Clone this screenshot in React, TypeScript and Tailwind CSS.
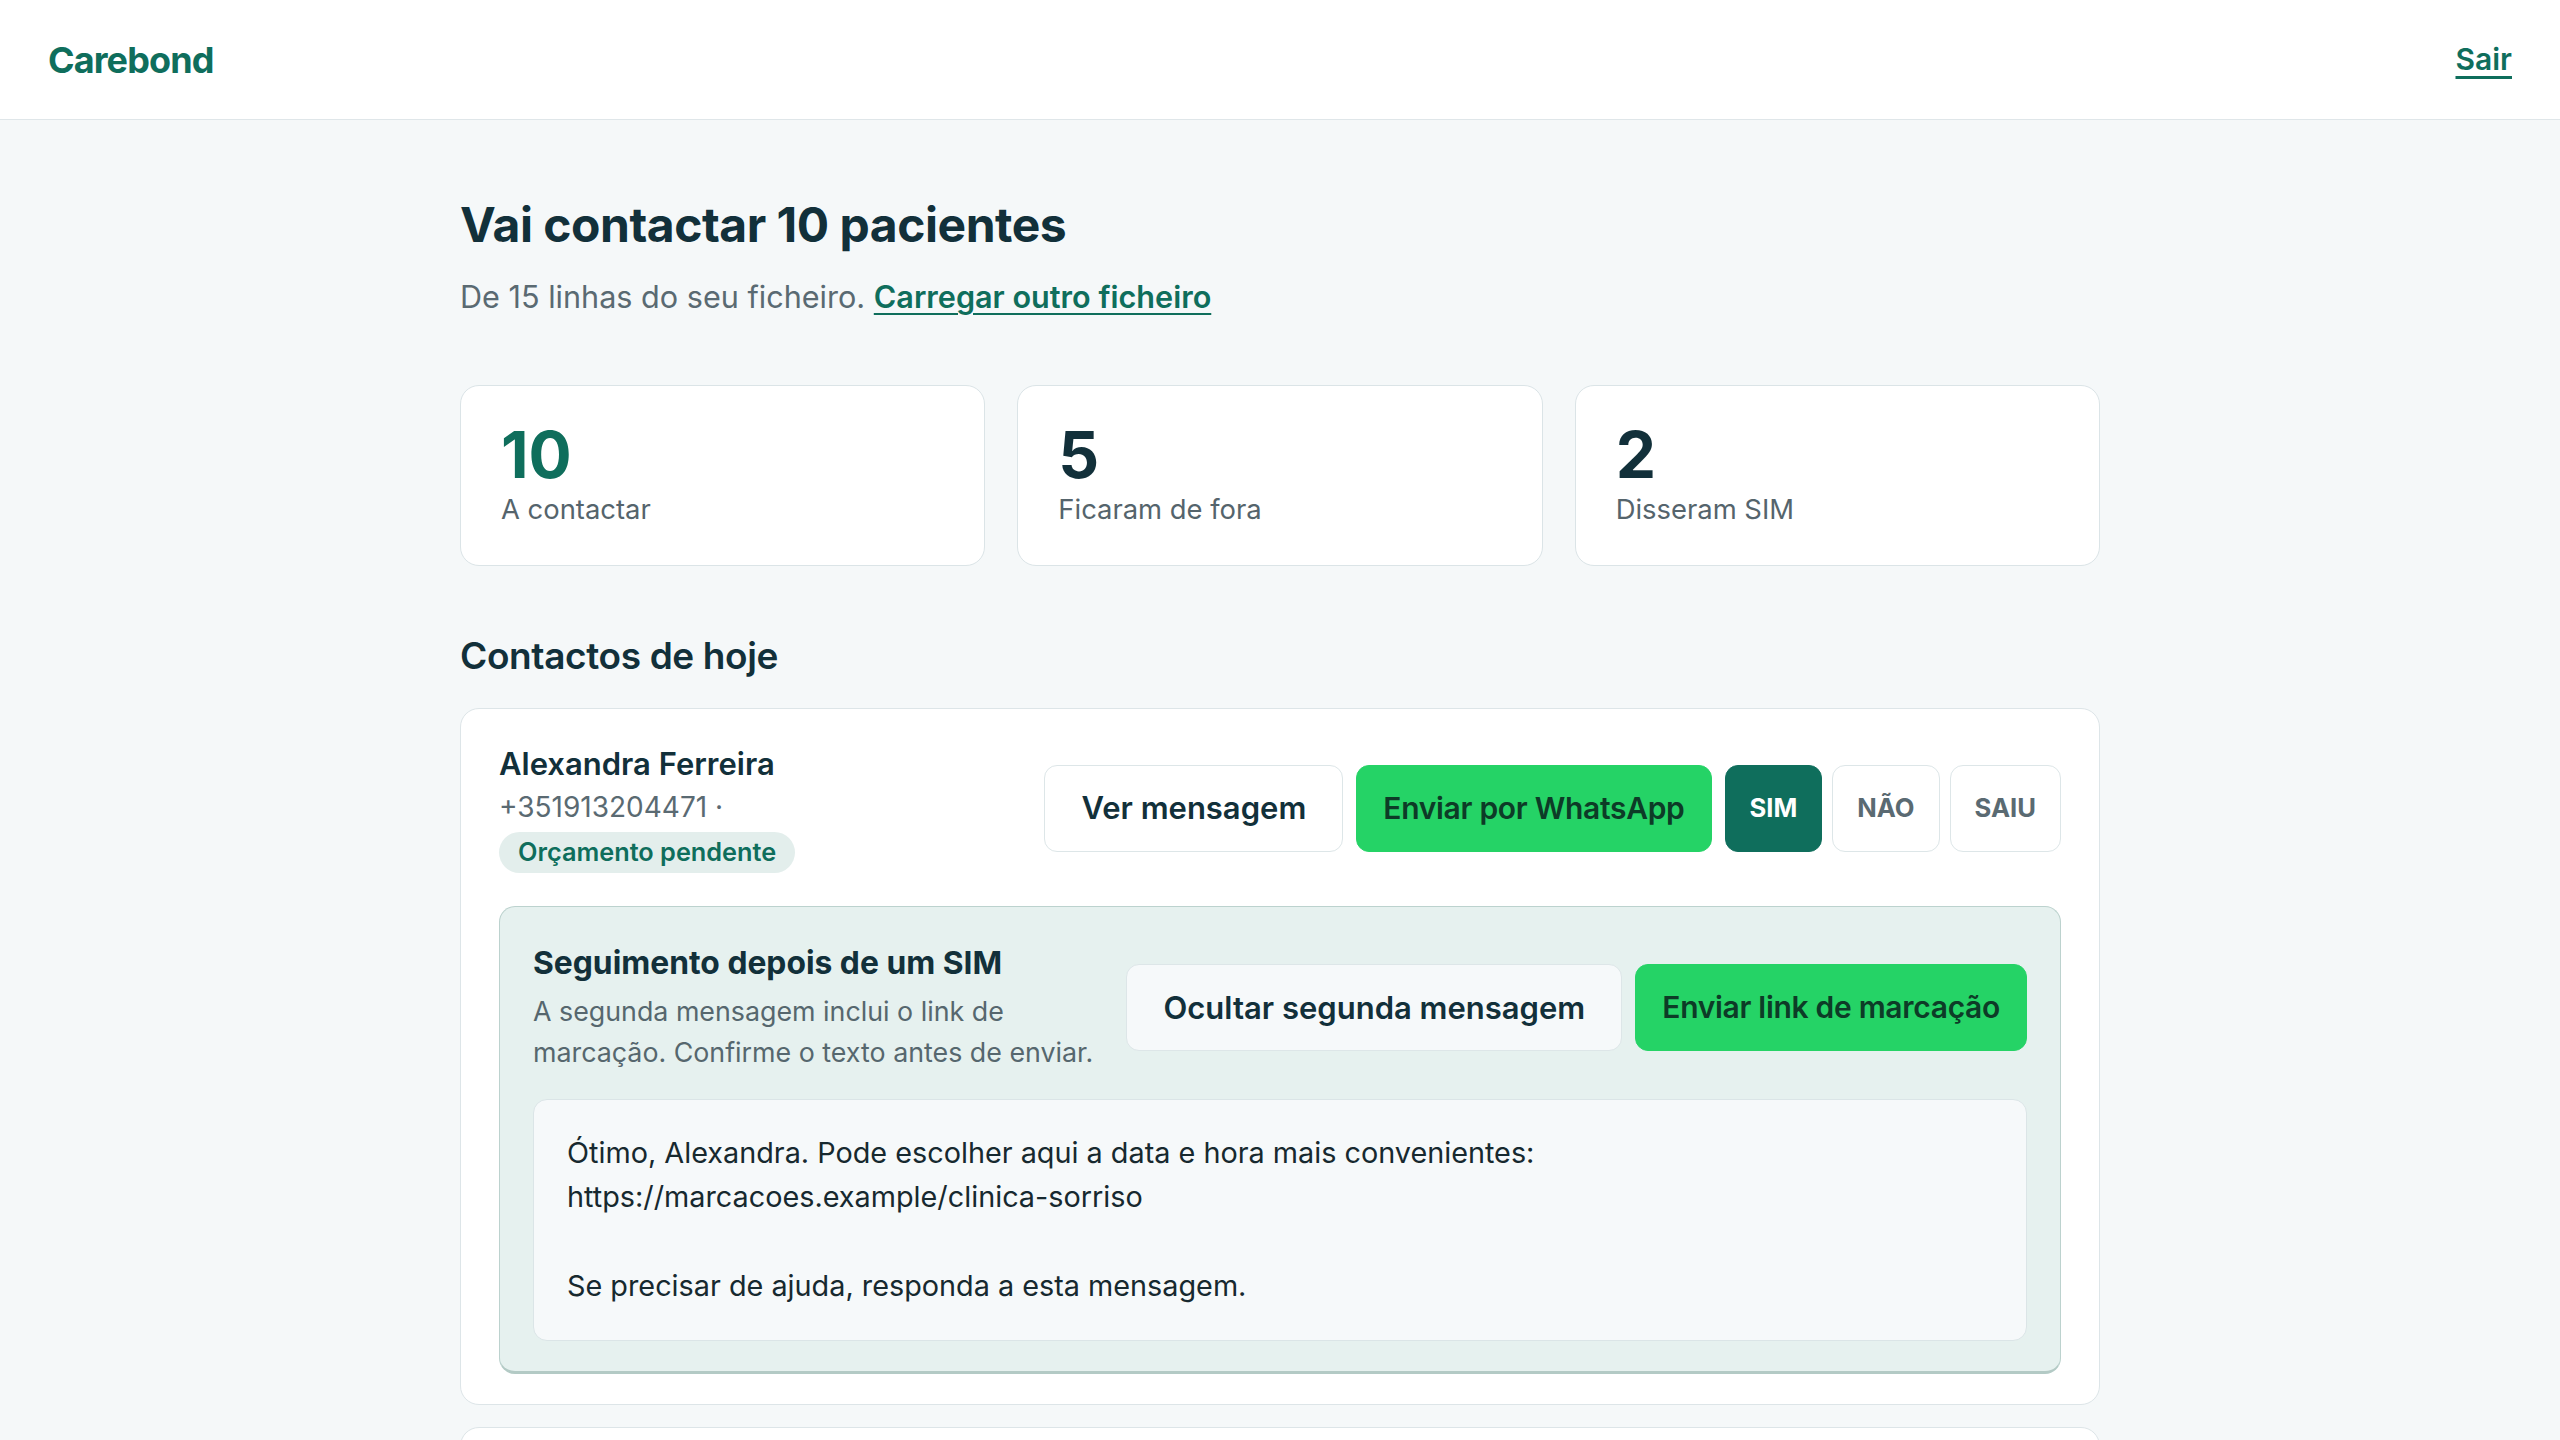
export default function App() {
  return (
    <div className="min-h-screen bg-[#f5f8f9] text-[#12303a] font-[Inter,'Noto_Sans',sans-serif]">
      <header className="h-[120px] bg-white border-b border-[#dfe6e9] flex items-center justify-between px-[48px]">
        <div className="text-[36px] font-bold tracking-tight text-[#0f6e5c]">Carebond</div>
        <a href="#" className="text-[30px] font-semibold underline underline-offset-[6px] decoration-[3px] text-[#0f6e5c]">Sair</a>
      </header>

      <main className="mx-auto w-[1640px] pt-[76px] pb-[80px]">
        <h1 className="text-[48px] font-bold leading-[1.2] tracking-[-0.01em]">Vai contactar 10 pacientes</h1>
        <p className="mt-[21px] text-[30.6px] leading-[1.45] text-[#5a6a72]">
          De 15 linhas do seu ficheiro.{" "}
          <a href="#" className="font-semibold text-[#0f6e5c] underline underline-offset-[5px] decoration-[2px]">Carregar outro ficheiro</a>
        </p>

        <div className="mt-[66px] grid grid-cols-3 gap-[32px]">
          <StatCard value="10" label="A contactar" accent />
          <StatCard value="5" label="Ficaram de fora" />
          <StatCard value="2" label="Disseram SIM" />
        </div>

        <h2 className="mt-[66px] text-[37px] font-semibold leading-[1.3] tracking-[-0.01em]">Contactos de hoje</h2>

        <div className="mt-[28px] flex flex-col gap-[22px]">
          <div className="rounded-[19px] border border-[#dde5e8] bg-white px-[38px] pt-[35px] pb-[30px]">
            <ContactRow name="Alexandra Ferreira" phone="+351913204471 ·" tag="Orçamento pendente" selected="SIM" />

            <div className="mt-[33px] rounded-[16px] border border-[#bcd2ce] border-b-[3px] border-b-[#b3cac5] bg-[#e6f1ef] px-[33px] pt-[35px] pb-[30px]">
              <div className="flex items-center gap-[24px]">
                <div className="flex-1 min-w-0">
                  <div className="text-[31.8px] font-bold leading-[1.3]">Seguimento depois de um SIM</div>
                  <div className="mt-[7px] text-[26.8px] leading-[1.55] text-[#56676e]">
                    A segunda mensagem inclui o link de marcação. Confirme o texto antes de enviar.
                  </div>
                </div>
                <div className="flex shrink-0 items-center gap-[13px]">
                  <button className="h-[87px] rounded-[13px] border border-[#dde6e8] bg-[#f6f9fa] px-[36px] text-[31px] font-semibold text-[#12303a]">
                    Ocultar segunda mensagem
                  </button>
                  <button className="h-[87px] rounded-[13px] border border-[#25d366] bg-[#25d366] px-[26px] text-[30px] font-semibold tracking-[-0.01em] text-[#0d3b27]">
                    Enviar link de marcação
                  </button>
                </div>
              </div>

              <div className="mt-[25px] rounded-[14px] border border-[#dbe5e7] bg-[#f6f9fa] px-[33px] py-[31px] text-[28.8px] leading-[1.55] whitespace-pre-line text-[#17292f]">
                {"Ótimo, Alexandra. Pode escolher aqui a data e hora mais convenientes:\nhttps://marcacoes.example/clinica-sorriso\n\nSe precisar de ajuda, responda a esta mensagem."}
              </div>
            </div>
          </div>

          <div className="rounded-[19px] border border-[#dde5e8] bg-white px-[38px] pt-[35px] pb-[36px]">
            <ContactRow name="Bruno Carvalho" phone="+351926118032 ·" tag="Limpeza em atraso" selected="" />
          </div>
        </div>
      </main>
    </div>
  );
}

function StatCard({ value, label, accent }: { value: string; label: string; accent?: boolean }) {
  return (
    <div className="rounded-[19px] border border-[#dbe4e7] bg-white px-[40px] pt-[36px] pb-[35px]">
      <div className={"text-[64px] font-bold leading-[1.02] " + (accent ? "text-[#0f6e5c]" : "text-[#12303a]")}>{value}</div>
      <div className="mt-[3px] text-[27.4px] leading-[1.45] text-[#55646c]">{label}</div>
    </div>
  );
}

function ContactRow({ name, phone, tag, selected }: { name: string; phone: string; tag: string; selected: string }) {
  const status = ["SIM", "NÃO", "SAIU"];
  return (
    <div className="flex items-center justify-between">
      <div>
        <div className="text-[31px] font-semibold leading-[1.3]">{name}</div>
        <div className="mt-[2px] text-[28px] leading-[1.5] text-[#5a6a72]">{phone}</div>
        <span className="mt-[4px] inline-block rounded-full bg-[#e3eeec] px-[19px] py-[4px] text-[25.3px] font-semibold leading-[1.3] text-[#0f6e5c]">
          {tag}
        </span>
      </div>
      <div className="flex items-center gap-[13px]">
        <button className="h-[87px] rounded-[13px] border border-[#dde6e8] bg-white px-[36px] text-[31px] font-semibold text-[#12303a]">
          Ver mensagem
        </button>
        <button className="h-[87px] rounded-[13px] border border-[#25d366] bg-[#25d366] px-[26px] text-[30px] font-semibold tracking-[-0.01em] text-[#0d3b27]">
          Enviar por WhatsApp
        </button>
        <div className="flex items-center gap-[10px]">
          {status.map((s) =>
            s === selected ? (
              <button key={s} className="h-[87px] rounded-[13px] border border-[#0f6e5c] bg-[#0f6e5c] px-[24px] text-[25.6px] font-bold text-white">
                {s}
              </button>
            ) : (
              <button key={s} className="h-[87px] rounded-[13px] border border-[#dde6e8] bg-white px-[24px] text-[25.6px] font-bold text-[#5a6a72]">
                {s}
              </button>
            )
          )}
        </div>
      </div>
    </div>
  );
}
